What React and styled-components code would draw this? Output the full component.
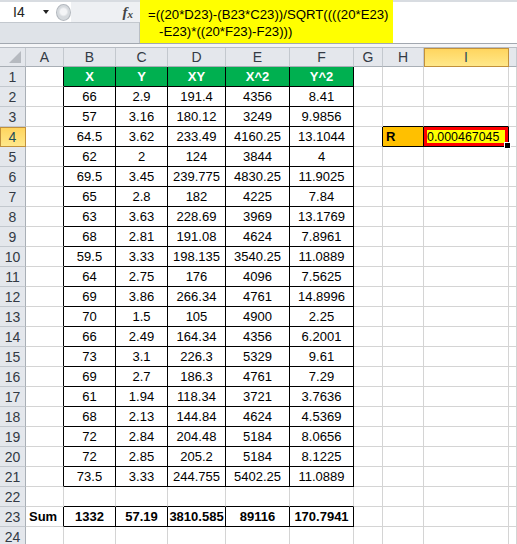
import React from 'react';
import styled, { createGlobalStyle } from 'styled-components';

const GlobalStyle = createGlobalStyle`
  html, body {
    margin: 0;
    padding: 0;
    background: #fff;
    overflow: hidden;
  }
  body {
    font-family: "Liberation Sans", Arial, sans-serif;
  }
`;

const COLS = [26, 38, 52, 52, 58, 64, 64, 29, 41, 85];
const LETTERS = ['', 'A', 'B', 'C', 'D', 'E', 'F', 'G', 'H', 'I', ''];
const GRID = '#d4d4d4';
const HEAD_LINE = '#c3c8ce';

const HEADERS = ['X', 'Y', 'XY', 'X^2', 'Y^2'];
const DATA = [
  ['66', '2.9', '191.4', '4356', '8.41'],
  ['57', '3.16', '180.12', '3249', '9.9856'],
  ['64.5', '3.62', '233.49', '4160.25', '13.1044'],
  ['62', '2', '124', '3844', '4'],
  ['69.5', '3.45', '239.775', '4830.25', '11.9025'],
  ['65', '2.8', '182', '4225', '7.84'],
  ['63', '3.63', '228.69', '3969', '13.1769'],
  ['68', '2.81', '191.08', '4624', '7.8961'],
  ['59.5', '3.33', '198.135', '3540.25', '11.0889'],
  ['64', '2.75', '176', '4096', '7.5625'],
  ['69', '3.86', '266.34', '4761', '14.8996'],
  ['70', '1.5', '105', '4900', '2.25'],
  ['66', '2.49', '164.34', '4356', '6.2001'],
  ['73', '3.1', '226.3', '5329', '9.61'],
  ['69', '2.7', '186.3', '4761', '7.29'],
  ['61', '1.94', '118.34', '3721', '3.7636'],
  ['68', '2.13', '144.84', '4624', '4.5369'],
  ['72', '2.84', '204.48', '5184', '8.0656'],
  ['72', '2.85', '205.2', '5184', '8.1225'],
  ['73.5', '3.33', '244.755', '5402.25', '11.0889'],
];
const SUMS = ['1332', '57.19', '3810.585', '89116', '170.7941'];
const ROW_COUNT = 24;

const FormulaBar = styled.div`
  display: grid;
  grid-template-columns: 140px 253px 1fr;
  height: 44px;
  box-sizing: border-box;
  border-bottom: 1px solid #a2a8b0;
`;

const NamePanel = styled.div`
  display: grid;
  grid-template-rows: 20px 1fr;
  border-top: 2px solid #d8dce1;
`;

const NameRow = styled.div`
  display: flex;
  align-items: center;
  background: #fff;
`;

const NameBox = styled.div`
  width: 55px;
  height: 100%;
  box-sizing: border-box;
  display: flex;
  align-items: center;
  justify-content: space-between;
  padding: 0 6px 0 13px;
  font-size: 14px;
  color: #222;
`;

const Arrow = styled.span`
  width: 0;
  height: 0;
  border-left: 3.5px solid transparent;
  border-right: 3.5px solid transparent;
  border-top: 4px solid #222;
`;

const Splitter = styled.span`
  width: 15px;
  height: 17px;
  margin-left: 1px;
  box-sizing: border-box;
  border-radius: 50%;
  border: 1px solid #b3b8be;
  background: radial-gradient(circle at 50% 45%, #f4f5f7 0 3px, #d6dade 5px);
`;

const FxArea = styled.div`
  flex: 1;
  height: 100%;
  display: flex;
  align-items: center;
  justify-content: flex-end;
  padding-right: 7px;
  background: #eef0f3;
  font-family: "Liberation Serif", "Times New Roman", serif;
  font-style: italic;
  font-weight: bold;
  font-size: 15px;
  color: #444;

  small {
    font-size: 11px;
    margin-top: 3px;
  }
`;

const NameFill = styled.div`
  background: #dfe3e8;
  border-top: 1px solid #c3c8ce;
  border-right: 1px solid #b9bec5;
`;

const Formula = styled.div`
  background: #ffff00;
  padding: 6px 0 0 8px;
  font-size: 13.2px;
  line-height: 17px;
  color: #000;
  white-space: nowrap;
`;

const FormulaLine = styled.div`
  padding-left: ${({ $indent }) => $indent || 0}px;
`;

const FormulaRest = styled.div`
  background: #fff;
  border-top: 2px solid #d8dce1;
`;

const Spacer = styled.div`
  height: 4px;
  box-sizing: border-box;
  background: #f4f5f7;
  border-bottom: 1px solid #b8bdc4;
`;

const Sheet = styled.div`
  display: grid;
  grid-template-columns: ${COLS.map(w => `${w}px`).join(' ')} 1fr;
  grid-template-rows: 19px;
  grid-auto-rows: 20px;
  font-size: 13px;
`;

const Corner = styled.div`
  position: relative;
  background: #e4e7ec;
  border-right: 1px solid ${HEAD_LINE};
  border-bottom: 1px solid #a9afb6;

  &::after {
    content: '';
    position: absolute;
    right: 4px;
    bottom: 3px;
    width: 12px;
    height: 12px;
    background: #b6bac0;
    clip-path: polygon(100% 0, 100% 100%, 0 100%);
  }
`;

const Header = styled.div`
  box-sizing: border-box;
  display: flex;
  align-items: center;
  justify-content: center;
  font-size: 14px;
  color: ${({ $active }) => ($active ? '#1f4e5a' : '#333a44')};
  background: ${({ $active }) =>
    $active ? 'linear-gradient(#ffd45c, #ffe88a)' : '#e4e7ec'};
  border-right: 1px solid ${({ $active, $side }) => ($active ? '#c2913b' : $side ? '#a9afb6' : HEAD_LINE)};
  border-bottom: 1px solid ${({ $active, $side }) => ($active ? '#c2913b' : $side ? HEAD_LINE : '#a9afb6')};
  box-shadow: ${({ $active }) => ($active ? 'inset 1px 1px 0 #c2913b' : 'none')};
`;

const Cell = styled.div`
  position: relative;
  box-sizing: border-box;
  display: flex;
  align-items: center;
  justify-content: ${({ $align }) => $align || 'center'};
  padding: 0 3px;
  white-space: nowrap;
  color: ${({ $color }) => $color || '#000'};
  font-weight: ${({ $bold }) => ($bold ? 'bold' : 'normal')};
  font-size: ${({ $small }) => ($small ? '12.4px' : 'inherit')};
  background: ${({ $bg }) => $bg || '#fff'};
  border-right: 1px solid ${({ $rc }) => $rc};
  border-bottom: 1px solid ${({ $bc }) => $bc};
  box-shadow: ${({ $mark }) => ($mark ? 'inset 0 0 0 3px #ff0000' : 'none')};
`;

const FillHandle = styled.span`
  position: absolute;
  right: -3px;
  bottom: -3px;
  width: 5px;
  height: 5px;
  background: #000;
  border: 1px solid #fff;
  z-index: 2;
`;

const inTable = (r, c) =>
  ((r >= 1 && r <= 21) || r === 23) && c >= 2 && c <= 6;

const bordered = (r, c) => inTable(r, c) || (r === 4 && (c === 8 || c === 9));

const cellProps = (r, c) => {
  const props = {
    $rc: bordered(r, c) || bordered(r, c + 1) ? '#000' : GRID,
    $bc: bordered(r, c) || bordered(r + 1, c) ? '#000' : GRID,
  };
  if (r === 1 && c >= 2 && c <= 6) {
    return { ...props, $bg: '#00b050', $color: '#fff', $bold: true, children: HEADERS[c - 2] };
  }
  if (r >= 2 && r <= 21 && c >= 2 && c <= 6) {
    return { ...props, children: DATA[r - 2][c - 2] };
  }
  if (r === 23 && c === 1) {
    return { ...props, $bold: true, $align: 'flex-start', children: 'Sum' };
  }
  if (r === 23 && c >= 2 && c <= 6) {
    return { ...props, $bold: true, children: SUMS[c - 2] };
  }
  if (r === 4 && c === 8) {
    return { ...props, $bg: '#ffc000', $bold: true, $align: 'flex-start', children: 'R' };
  }
  if (r === 4 && c === 9) {
    return {
      ...props,
      $bg: '#ffff00',
      $mark: true,
      $small: true,
      $align: 'flex-start',
      children: (
        <>
          0.000467045
          <FillHandle />
        </>
      ),
    };
  }
  return props;
};

export default function App() {
  const rows = Array.from({ length: ROW_COUNT }, (_, i) => i + 1);
  return (
    <>
      <GlobalStyle />
      <FormulaBar>
        <NamePanel>
          <NameRow>
            <NameBox>
              I4
              <Arrow />
            </NameBox>
            <Splitter />
            <FxArea>
              f<small>x</small>
            </FxArea>
          </NameRow>
          <NameFill />
        </NamePanel>
        <Formula>
          <FormulaLine>=((20*D23)-(B23*C23))/SQRT((((20*E23)</FormulaLine>
          <FormulaLine $indent={11}>-E23)*((20*F23)-F23)))</FormulaLine>
        </Formula>
        <FormulaRest />
      </FormulaBar>
      <Spacer />
      <Sheet>
        <Corner />
        {LETTERS.slice(1).map((l, i) => (
          <Header key={`h${i}`} $active={l === 'I'}>
            {l}
          </Header>
        ))}
        {rows.map(r => (
          <React.Fragment key={r}>
            <Header $side $active={r === 4}>
              {r}
            </Header>
            {LETTERS.slice(1).map((_, i) => {
              const { children, ...rest } = cellProps(r, i + 1);
              return (
                <Cell key={i} {...rest}>
                  {children}
                </Cell>
              );
            })}
          </React.Fragment>
        ))}
      </Sheet>
    </>
  );
}
